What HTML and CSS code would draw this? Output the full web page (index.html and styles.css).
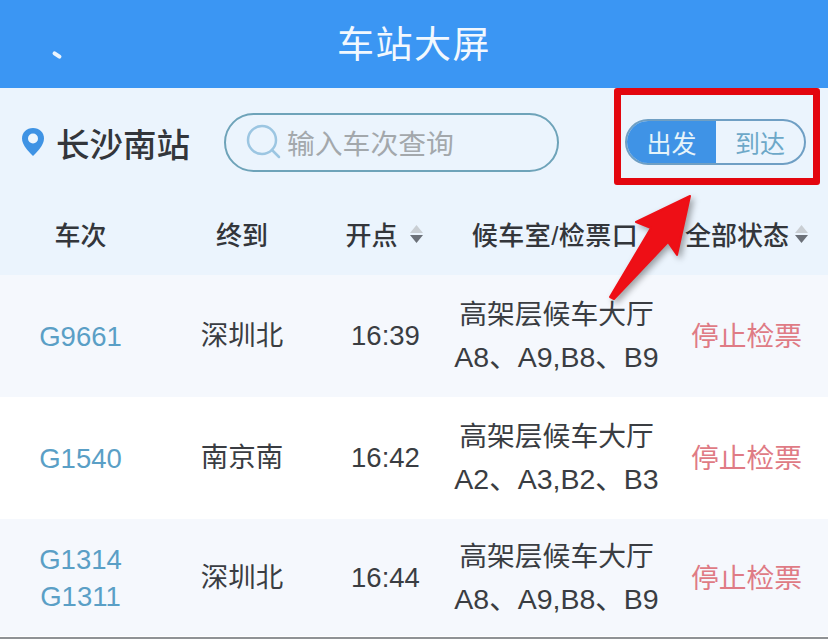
FILE: index.html
```html
<!DOCTYPE html>
<html lang="zh-CN">
<head>
    <meta charset="UTF-8">
    <meta name="viewport" content="width=device-width, initial-scale=1.0">
    <title>车站大屏</title>
    <link rel="stylesheet" href="styles.css">
</head>
<body>
    <div class="page">
        <header class="topbar">
            <span class="back-mark"></span>
            <h1>车站大屏</h1>
        </header>

        <div class="toolbar">
            <div class="station">
                <svg class="pin" width="24" height="30" viewBox="0 0 24 30">
                    <path d="M12 1C5.6 1 1 5.6 1 11.5 1 18 7.500 24.500 12 29c4.500-4.500 11-11 11-17.500C23 5.600 18.400 1 12 1z" fill="#3f93e4"/>
                    <circle cx="12" cy="11.500" r="5" fill="#eef6fd"/>
                </svg>
                <span class="station-name">长沙南站</span>
            </div>
            <div class="search">
                <svg class="search-icon" width="36" height="36" viewBox="0 0 36 36">
                    <circle cx="16" cy="16" r="14" fill="none" stroke="#9cc6e2" stroke-width="2.500"/>
                    <path d="M26 26l7 7" stroke="#9cc6e2" stroke-width="2.500" stroke-linecap="round"/>
                </svg>
                <span class="placeholder">输入车次查询</span>
            </div>
            <div class="toggle">
                <span class="toggle-item active">出发</span>
                <span class="toggle-item">到达</span>
            </div>
        </div>

        <div class="row head">
            <div>车次</div>
            <div>终到</div>
            <div class="sortable">开点
                <svg class="sort" width="15" height="20" viewBox="0 0 15 20">
                    <path d="M7.500 1L14 9H1z" fill="#c9ced3"/>
                    <path d="M1 11h13l-6.500 8z" fill="#6b7078"/>
                </svg>
            </div>
            <div class="wide">候车室/检票口</div>
            <div class="sortable">全部状态
                <svg class="sort narrow" width="15" height="20" viewBox="0 0 15 20">
                    <path d="M7.500 1L14 9H1z" fill="#c9ced3"/>
                    <path d="M1 11h13l-6.500 8z" fill="#6b7078"/>
                </svg>
            </div>
        </div>

        <div class="row item tint">
            <div class="train">G9661</div>
            <div>深圳北</div>
            <div>16:39</div>
            <div class="gate">高架层候车大厅<br><span class="gate-code">A8、A9,B8、B9</span></div>
            <div class="status">停止检票</div>
        </div>
        <div class="row item">
            <div class="train">G1540</div>
            <div>南京南</div>
            <div>16:42</div>
            <div class="gate">高架层候车大厅<br><span class="gate-code">A2、A3,B2、B3</span></div>
            <div class="status">停止检票</div>
        </div>
        <div class="row item tint last">
            <div class="train">G1314<br>G1311</div>
            <div>深圳北</div>
            <div>16:44</div>
            <div class="gate">高架层候车大厅<br><span class="gate-code">A8、A9,B8、B9</span></div>
            <div class="status">停止检票</div>
        </div>

        <!-- red annotation on top of the screenshot -->
        <div class="callout-box"></div>
        <svg class="callout-arrow" width="110" height="125" viewBox="0 0 110 125">
            <path d="M96 4L42 30 57 36 16 105 20 107 74 50 83 63z" fill="#ee0f16" stroke="#ee0f16" stroke-width="2" stroke-linejoin="round"/>
        </svg>
    </div>
</body>
</html>
```

FILE: styles.css
```css
* {
    box-sizing: border-box;
}
body {
    margin: 0;
    font-family: "Liberation Sans", "Noto Sans CJK SC", sans-serif;
    color: #3a3d42;
}
.page {
    position: relative;
    width: 828px;
    height: 639px;
    overflow: hidden;
    background: #fff;
    display: flex;
    flex-direction: column;
}
.topbar {
    height: 88px;
    flex: none;
    padding-bottom: 5px;
    background: #3b96f3;
    display: flex;
    align-items: center;
    justify-content: center;
}
.topbar h1 {
    margin: 0;
    font-size: 37px;
    font-weight: 400;
    letter-spacing: 1.500px;
    color: #f2f8fe;
}
.back-mark {
    position: absolute;
    left: 52px;
    top: 53px;
    width: 10px;
    height: 4px;
    background: #eaf4fd;
    border-radius: 2px;
    transform: rotate(35deg);
}
.toolbar {
    height: 112px;
    flex: none;
    padding: 0 22px 4px 21px;
    background: #ebf4fd;
    display: flex;
    align-items: center;
}
.station {
    display: flex;
    align-items: center;
    width: 203px;
}
.pin {
    margin-right: 11px;
}
.station-name {
    font-size: 33.500px;
    font-weight: 500;
    color: #33363b;
}
.search {
    width: 335px;
    height: 59px;
    border: 2px solid #6ea3b9;
    border-radius: 30px;
    display: flex;
    align-items: center;
    padding-left: 20px;
}
.search-icon {
    margin-right: 5px;
}
.placeholder {
    font-size: 27.800px;
    color: #a3a8ac;
}
.toggle {
    margin-left: auto;
    width: 181px;
    height: 46px;
    border: 2px solid #6f9fc4;
    border-radius: 23px;
    overflow: hidden;
    display: flex;
}
.toggle-item {
    flex: 1;
    display: flex;
    align-items: center;
    justify-content: center;
    font-size: 25px;
    color: #6da8c8;
}
.toggle-item.active {
    flex: none;
    width: 89px;
    background: #3f93e6;
    color: #e6f4fa;
}
.row {
    display: grid;
    grid-template-columns: 161px 162px 125px 217px 163px;
    align-items: center;
    text-align: center;
}
.head {
    height: 75px;
    flex: none;
    padding-bottom: 8px;
    background: #ebf4fd;
    font-size: 26px;
    font-weight: 500;
    color: #33363b;
}
.head .wide {
    margin-left: -3px;
    letter-spacing: 0.500px;
}
.sortable {
    display: flex;
    align-items: center;
    justify-content: center;
}
.sort {
    flex: none;
    margin-left: 11px;
    margin-right: 2px;
}
.sort.narrow {
    margin-left: 5px;
    margin-right: -1px;
}
.item {
    height: 122px;
    flex: none;
    font-size: 27.500px;
    line-height: 42px;
}
.tint {
    background: #f5f8fd;
}
.last {
    height: 117px;
}
.train {
    line-height: 37px;
    color: #5a9fc6;
}
.gate {
    font-size: 27.800px;
    line-height: 43px;
}
.gate-code {
    font-size: 28.500px;
}
.status {
    padding-top: 2px;
    font-size: 27.800px;
    color: #df7b85;
}
.callout-box {
    position: absolute;
    left: 614px;
    top: 88px;
    width: 206px;
    height: 97px;
    border: 7px solid #e3060f;
    border-radius: 3px;
}
.callout-arrow {
    position: absolute;
    left: 594px;
    top: 192px;
    filter: drop-shadow(3px 3px 3px rgba(0, 0, 0, 0.35));
}
.page::after {
    content: "";
    position: absolute;
    left: 0;
    right: 0;
    bottom: 0;
    height: 2px;
    background: #8f9295;
}
```
